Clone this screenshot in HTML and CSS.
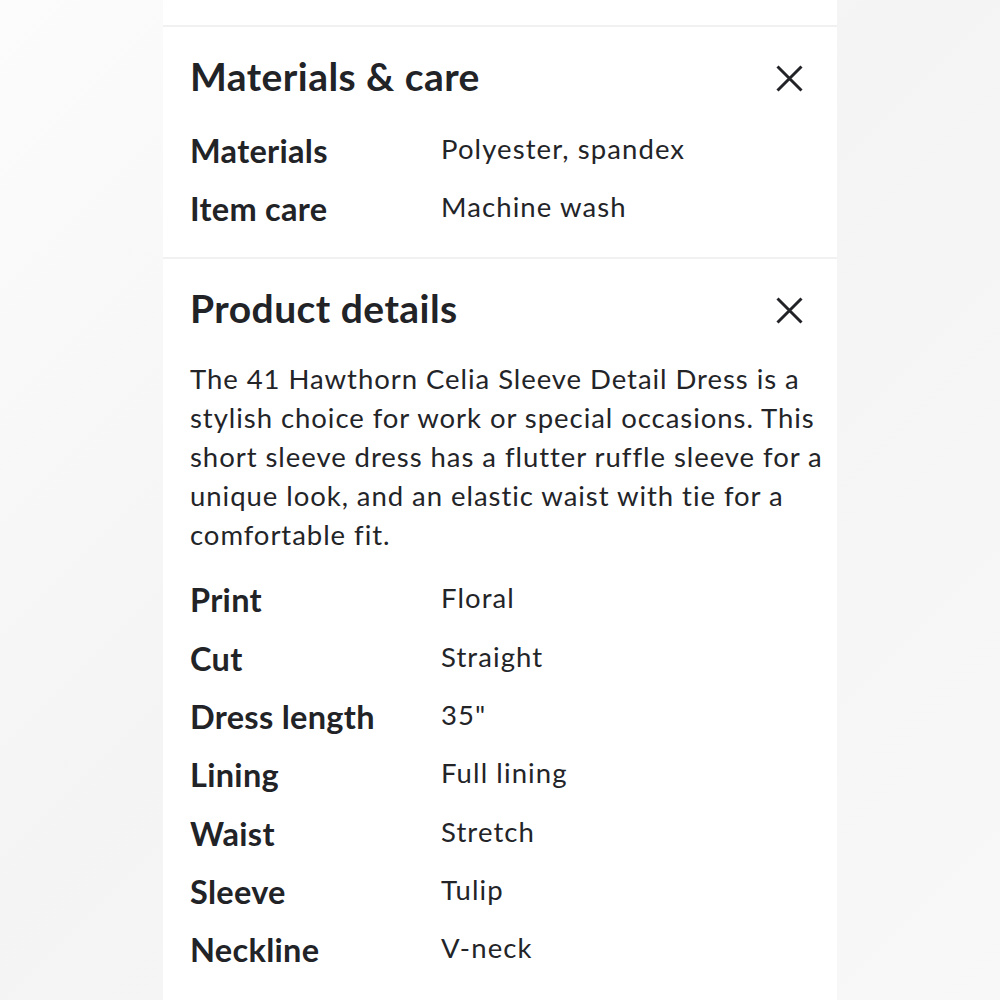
FILE: index.html
```html
<!DOCTYPE html>
<html lang="en">
<head>
<meta charset="utf-8">
<title>Product details</title>
<link rel="stylesheet" href="styles.css">
</head>
<body>
<div class="page">
  <div class="panel">
    <div class="top-stub"></div>
    <section class="section">
      <div class="section-head">
        <h2 class="section-title">Materials &amp; care</h2>
        <button class="close" aria-label="Close">
          <svg viewBox="0 0 27 27" width="27" height="27"><path d="M1.5 1.5 L25.5 25.5 M25.5 1.5 L1.5 25.5" stroke="#222327" stroke-width="3" fill="none"/></svg>
        </button>
      </div>
      <dl class="specs">
        <div class="spec"><dt>Materials</dt><dd>Polyester, spandex</dd></div>
        <div class="spec"><dt>Item care</dt><dd>Machine wash</dd></div>
      </dl>
    </section>
    <section class="section">
      <div class="section-head">
        <h2 class="section-title">Product details</h2>
        <button class="close" aria-label="Close">
          <svg viewBox="0 0 27 27" width="27" height="27"><path d="M1.5 1.5 L25.5 25.5 M25.5 1.5 L1.5 25.5" stroke="#222327" stroke-width="3" fill="none"/></svg>
        </button>
      </div>
      <p class="desc">The 41 Hawthorn Celia Sleeve Detail Dress is a stylish choice for work or special occasions. This short sleeve dress has a flutter ruffle sleeve for a unique look, and an elastic waist with tie for a comfortable fit.</p>
      <dl class="specs specs-details">
        <div class="spec"><dt>Print</dt><dd>Floral</dd></div>
        <div class="spec"><dt>Cut</dt><dd>Straight</dd></div>
        <div class="spec"><dt>Dress length</dt><dd>35"</dd></div>
        <div class="spec"><dt>Lining</dt><dd>Full lining</dd></div>
        <div class="spec"><dt>Waist</dt><dd>Stretch</dd></div>
        <div class="spec"><dt>Sleeve</dt><dd>Tulip</dd></div>
        <div class="spec"><dt>Neckline</dt><dd>V-neck</dd></div>
      </dl>
    </section>
  </div>
</div>
</body>
</html>
```
FILE: styles.css
```css
* { box-sizing: border-box; }
html, body { margin: 0; padding: 0; }
body {
  background: linear-gradient(135deg, #fcfcfd 0%, #f4f4f5 45%, #f8f8f9 100%);
  font-family: "Lato", "Noto Sans", sans-serif;
  color: #232428;
  height: 1000px;
  overflow: hidden;
}
.page {
  display: flex;
  justify-content: center;
}
.panel {
  width: 674px;
  background: #fff;
  min-height: 1000px;
}
.top-stub {
  height: 27px;
  border-bottom: 2px solid #f1f1f2;
}
.section {
  padding: 26px 10px 19px 27px;
  border-bottom: 2px solid #f1f1f2;
}
.section:last-child { border-bottom: none; }
.section-head {
  display: flex;
  justify-content: space-between;
  align-items: flex-start;
  height: 46px;
}
.section-title {
  margin: 0;
  font-size: 39px;
  font-weight: 700;
  letter-spacing: 0.45px;
  line-height: 46px;
  color: #222327;
}
.close {
  background: none;
  border: 0;
  padding: 0;
  margin: 12px 24px 0 0;
  width: 27px;
  height: 27px;
  display: flex;
}
.desc {
  margin: 28.5px 0 0;
  font-size: 27.5px;
  line-height: 39px;
  letter-spacing: 0.95px;
}
.specs {
  margin: 22.7px 0 0;
}
.specs-details {
  margin-top: 17px;
}
.spec {
  display: grid;
  grid-template-columns: 251px 1fr;
  height: 58px;
  align-items: start;
}
.specs-details .spec {
  height: 58.35px;
}
.spec dt {
  font-size: 32.5px;
  font-weight: 700;
  line-height: 58px;
  letter-spacing: 0.3px;
  color: #222327;
}
.spec dd {
  margin: 0;
  font-size: 27.5px;
  line-height: 54px;
  letter-spacing: 1.1px;
}
```
